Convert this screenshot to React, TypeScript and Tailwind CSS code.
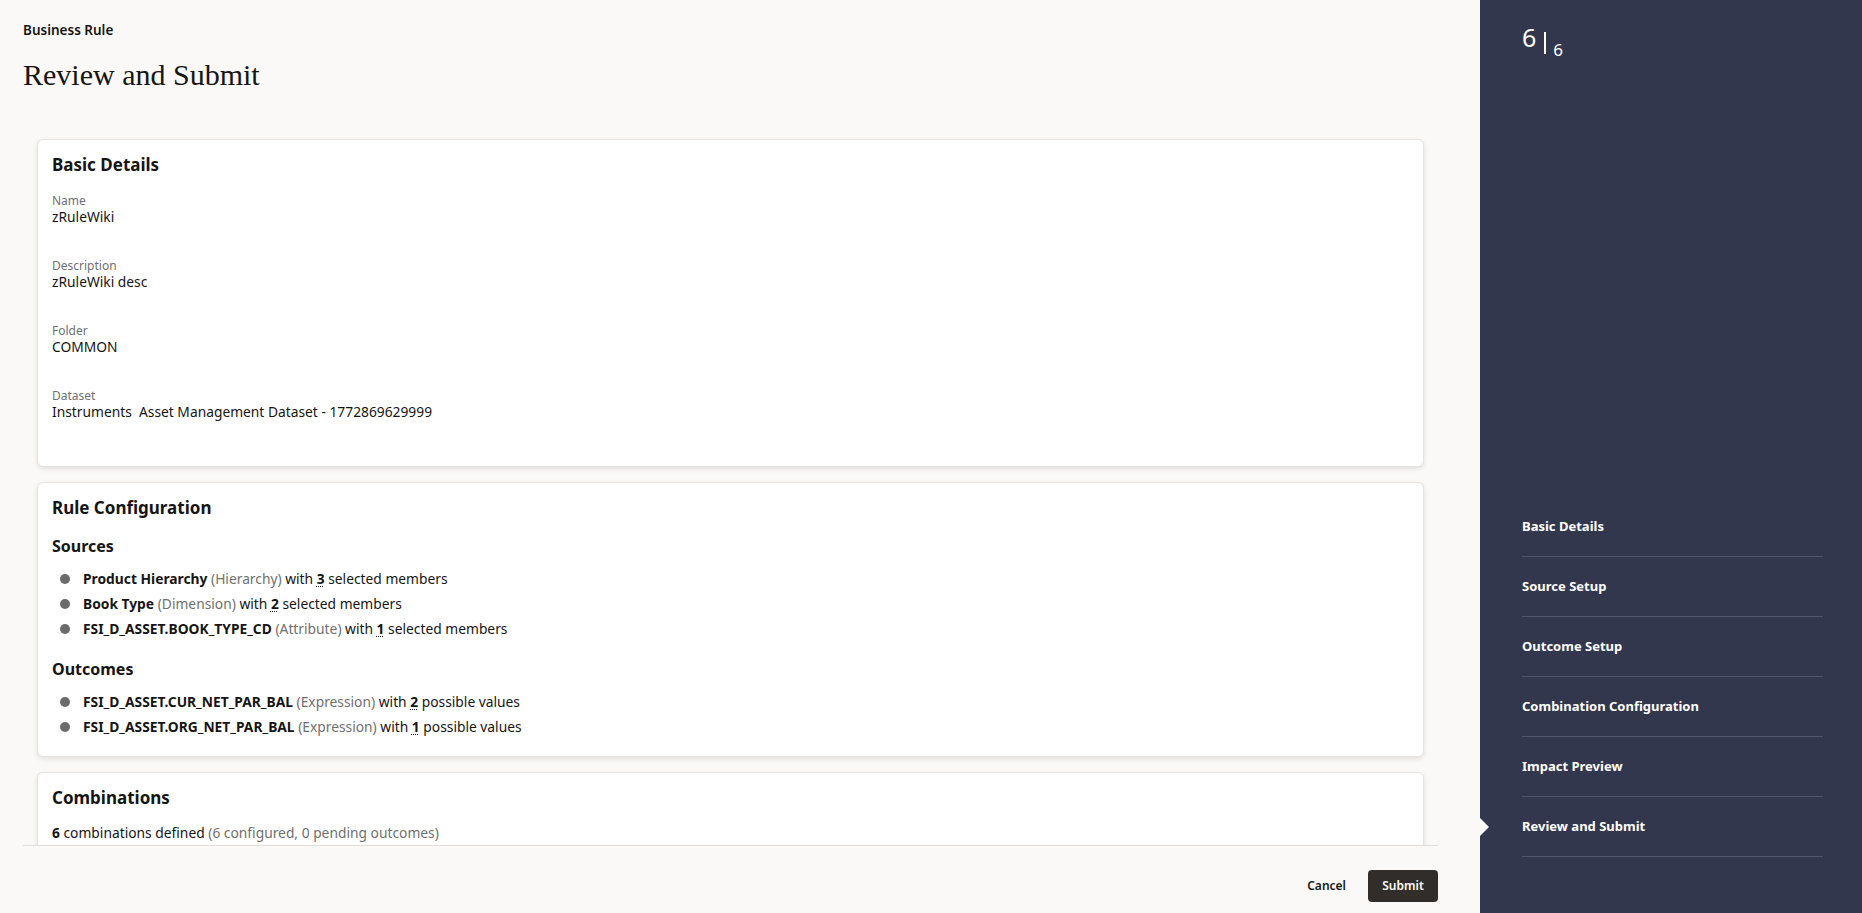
import React from "react";

type Item = { name: string; kind: string; count: number; tail: string };

const sources: Item[] = [
  { name: "Product Hierarchy", kind: "Hierarchy", count: 3, tail: "selected members" },
  { name: "Book Type", kind: "Dimension", count: 2, tail: "selected members" },
  { name: "FSI_D_ASSET.BOOK_TYPE_CD", kind: "Attribute", count: 1, tail: "selected members" },
];

const outcomes: Item[] = [
  { name: "FSI_D_ASSET.CUR_NET_PAR_BAL", kind: "Expression", count: 2, tail: "possible values" },
  { name: "FSI_D_ASSET.ORG_NET_PAR_BAL", kind: "Expression", count: 1, tail: "possible values" },
];

const details = [
  { label: "Name", value: "zRuleWiki" },
  { label: "Description", value: "zRuleWiki desc" },
  { label: "Folder", value: "COMMON" },
  { label: "Dataset", value: "Instruments\u00a0 Asset Management Dataset - 1772869629999" },
];

const steps = [
  "Basic Details",
  "Source Setup",
  "Outcome Setup",
  "Combination Configuration",
  "Impact Preview",
  "Review and Submit",
];

function Card({ children, className = "" }: { children: React.ReactNode; className?: string }) {
  return (
    <div
      className={`shrink-0 rounded-[6px] border border-[#e6e4e1] bg-white px-[14px] pt-[13px] shadow-[0_2px_5px_rgba(0,0,0,0.1)] ${className}`}
    >
      {children}
    </div>
  );
}

function ItemList({ items }: { items: Item[] }) {
  return (
    <ul className="mt-[8px]">
      {items.map((it) => (
        <li key={it.name} className="flex items-center text-[13.8px] leading-[25px]">
          <span className="ml-[8px] mr-[13px] h-[10px] w-[10px] shrink-0 rounded-full bg-[#6b6b6b]" />
          <span>
            <b className="font-bold">{it.name}</b>{" "}
            <span className="text-[#6f6f6f]">({it.kind})</span> with{" "}
            <b className="font-bold underline decoration-dotted decoration-1 underline-offset-2">{it.count}</b>{" "}
            {it.tail}
          </span>
        </li>
      ))}
    </ul>
  );
}

export default function App() {
  return (
    <div
      className="flex h-screen w-full overflow-hidden bg-[#faf9f8] text-[#161513]"
      style={{ fontFamily: '"Noto Sans", "Liberation Sans", sans-serif' }}
    >
      {/* main column */}
      <div className="flex min-w-0 flex-1 flex-col pl-[23px] pr-[42px]">
        <div className="pt-[20px] text-[13.5px] font-semibold leading-[20px]">Business Rule</div>
        <h1 className="mt-[17px] font-['Liberation_Serif',serif] text-[30px] leading-[36px] font-normal">
          Review and Submit
        </h1>

        <div className="mt-[32px] flex min-h-0 flex-1 flex-col gap-[15px] overflow-hidden px-[14px] pt-[14px]">
          <Card className="pb-[12px]">
            <h2 className="text-[17px] font-bold leading-[24px]">Basic Details</h2>
            <div className="mt-[17px]">
              {details.map((d) => (
                <div key={d.label} className="h-[65px]">
                  <div className="text-[12px] leading-[14px] text-[#6f6f6f]">{d.label}</div>
                  <div className="text-[13.8px] leading-[18px]">{d.value}</div>
                </div>
              ))}
            </div>
          </Card>

          <Card className="pb-[17px]">
            <h2 className="text-[17px] font-bold leading-[24px]">Rule Configuration</h2>
            <h3 className="mt-[14px] text-[16px] font-bold leading-[24px]">Sources</h3>
            <ItemList items={sources} />
            <h3 className="mt-[16px] text-[16px] font-bold leading-[24px]">Outcomes</h3>
            <ItemList items={outcomes} />
          </Card>

          <Card className="pb-[14px]">
            <h2 className="text-[17px] font-bold leading-[24px]">Combinations</h2>
            <p className="mt-[13px] text-[13.8px] leading-[20px]">
              <b className="font-bold">6</b> combinations defined{" "}
              <span className="text-[#6f6f6f]">(6 configured, 0 pending outcomes)</span>
            </p>
          </Card>
        </div>

        {/* footer actions */}
        <div className="flex h-[68px] shrink-0 items-start justify-end gap-[10px] border-t border-[#e0dedb] pt-[24px]">
          <button className="h-[32px] px-[12px] text-[12px] font-semibold text-[#161513]">Cancel</button>
          <button className="h-[32px] w-[70px] rounded-[4px] bg-[#312d2a] text-[12px] font-semibold text-white">
            Submit
          </button>
        </div>
      </div>

      {/* step rail */}
      <div className="relative flex w-[382px] shrink-0 flex-col bg-[#33374d] pl-[42px] pr-[39px] text-white">
        <div className="flex items-start pt-[25px]">
          <span className="text-[25px] leading-[25px]">6</span>
          <span className="ml-[8px] mt-[7px] h-[22px] w-[2px] bg-white" />
          <span className="ml-[7px] mt-[16px] text-[17px] leading-[17px]">6</span>
        </div>

        <ul className="mt-auto mb-[56px]">
          {steps.map((s) => (
            <li
              key={s}
              className="flex h-[60px] items-center border-b border-[#52566a] text-[13px] font-bold"
            >
              {s}
            </li>
          ))}
        </ul>

        <span className="absolute bottom-[77px] left-0 h-0 w-0 border-y-[9px] border-l-[9px] border-y-transparent border-l-[#faf9f8]" />
      </div>
    </div>
  );
}
